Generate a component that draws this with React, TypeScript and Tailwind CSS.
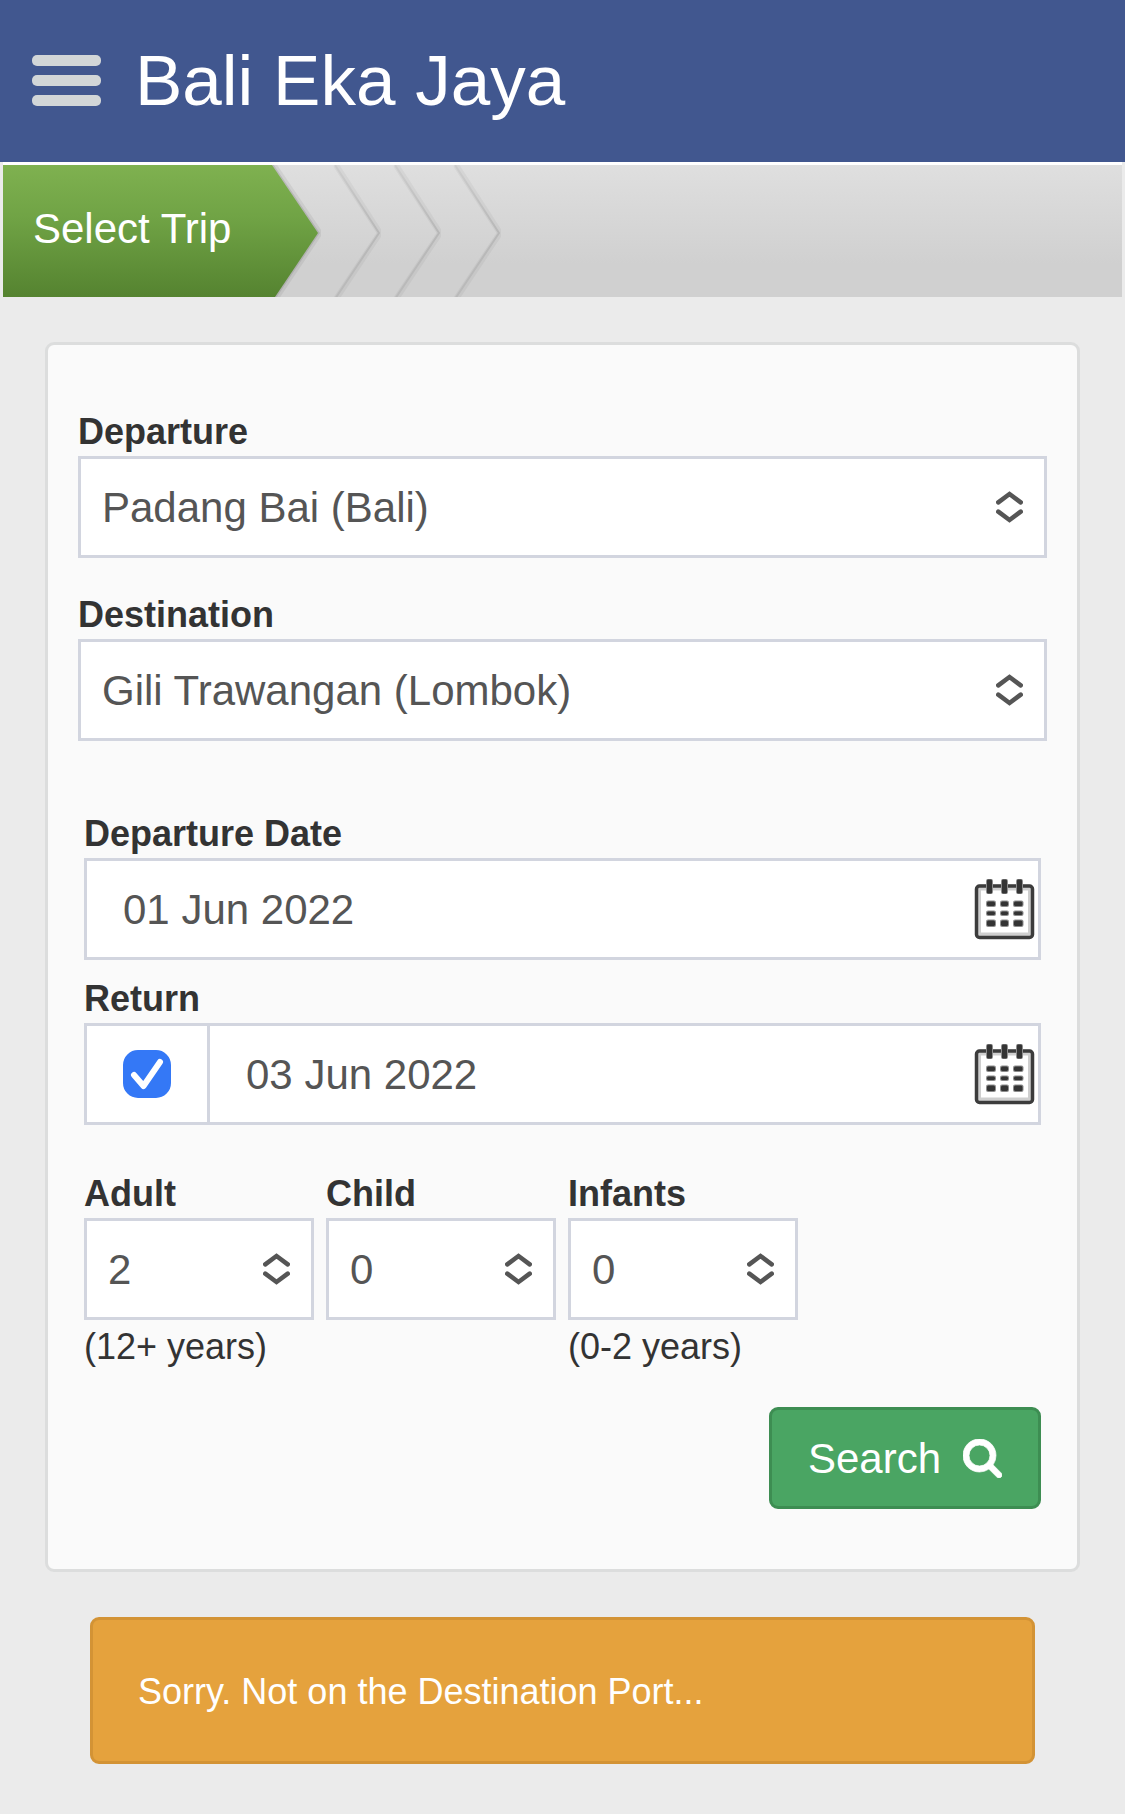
import { useState, type ReactNode } from "react";

const places = ["Padang Bai (Bali)", "Gili Trawangan (Lombok)"];
const counts = ["0", "1", "2", "3", "4", "5"];

function SortArrows() {
  return (
    <svg
      aria-hidden="true"
      viewBox="0 0 27 32"
      className="pointer-events-none absolute top-1/2 right-6 h-8 w-[27px] -translate-y-1/2"
      fill="none"
      stroke="#555555"
      strokeWidth="4.600"
      strokeLinecap="round"
    >
      <path d="M2.300 11.300 13.500 3 24.700 11.300M2.300 20.700 13.500 29 24.700 20.700" />
    </svg>
  );
}

function CalendarIcon() {
  const cols = [
    { x: 12.5, w: 9 },
    { x: 26.5, w: 8 },
    { x: 39.5, w: 9.5 },
  ];
  const rows = [
    { y: 23, h: 5.5 },
    { y: 33, h: 4.5 },
    { y: 42, h: 6.5 },
  ];
  return (
    <svg aria-hidden="true" viewBox="0 0 61 62" className="h-[62px] w-[61px]">
      <rect x="4" y="9.5" width="53" height="48" rx="2" fill="none" stroke="#cfcfcf" strokeWidth="6" />
      <rect x="2.5" y="8" width="56" height="51.5" rx="3" fill="none" stroke="#3c3c3c" strokeWidth="3.500" />
      <g fill="#8d8d8d">
        <rect x="12" y="1" width="7" height="15" rx="2" />
        <rect x="27" y="1" width="7" height="15" rx="2" />
        <rect x="42" y="1" width="7" height="15" rx="2" />
        {rows.map((r) =>
          cols.map((c) => <rect key={`${c.x}-${r.y}`} x={c.x - 0.5} y={r.y - 0.5} width={c.w + 1} height={r.h + 1} rx="2" />)
        )}
      </g>
      <g fill="#343434">
        <rect x="13" y="1.5" width="5" height="14" rx="1" />
        <rect x="28" y="1.5" width="5" height="14" rx="1" />
        <rect x="43" y="1.5" width="5" height="14" rx="1" />
        {rows.map((r) =>
          cols.map((c) => <rect key={`${c.x}-${r.y}`} x={c.x + 0.5} y={r.y + 0.5} width={c.w - 1} height={r.h - 1} rx="1.500" />)
        )}
      </g>
    </svg>
  );
}

function SelectField(props: {
  id: string;
  label: string;
  options: string[];
  initial: string;
  hint?: string;
  className?: string;
}) {
  const [value, setValue] = useState(props.initial);
  return (
    <div className={props.className}>
      <label htmlFor={props.id} className="block text-[36px] leading-[48px] font-bold text-[#333333]">
        {props.label}
      </label>
      <div className="relative">
        <select
          id={props.id}
          value={value}
          onChange={(e) => setValue(e.target.value)}
          className="block h-[102px] w-full appearance-none border-3 border-[#d2d5df] bg-white px-[21px] text-[42px] text-[#555555]"
        >
          {props.options.map((o) => (
            <option key={o}>{o}</option>
          ))}
        </select>
        <SortArrows />
      </div>
      {props.hint && <p className="text-[36px] leading-[54px] text-[#333333]">{props.hint}</p>}
    </div>
  );
}

function DateField(props: { id: string; label: string; initial: string; lead?: ReactNode; className?: string }) {
  const [value, setValue] = useState(props.initial);
  return (
    <div className={props.className}>
      <label htmlFor={props.id} className="block text-[36px] leading-[48px] font-bold text-[#333333]">
        {props.label}
      </label>
      <div className="flex h-[102px] items-stretch border-3 border-[#d2d5df] bg-white">
        {props.lead}
        <input
          id={props.id}
          type="text"
          value={value}
          onChange={(e) => setValue(e.target.value)}
          className="min-w-0 flex-1 bg-transparent px-9 text-[42px] text-[#555555] outline-none"
        />
        <button type="button" aria-label={`Choose ${props.label} date`} className="flex items-center pr-[3px]">
          <CalendarIcon />
        </button>
      </div>
    </div>
  );
}

function StepDivider({ id }: { id: string }) {
  return (
    <svg aria-hidden="true" viewBox="0 0 60 132" className="h-full w-[60px]" fill="none">
      <defs>
        <linearGradient id={id} gradientUnits="userSpaceOnUse" x1="0" y1="0" x2="0" y2="132">
          <stop offset="0" stopColor="#cdcdcd" />
          <stop offset="0.5" stopColor="#b8b8b8" />
          <stop offset="1" stopColor="#bababa" />
        </linearGradient>
      </defs>
      <path d="M15 0 59 68 15 134" stroke="#000000" strokeOpacity="0.04" strokeWidth="6" />
      <path d="M14 0 58 68 14 134" stroke={`url(#${id})`} strokeWidth="2" />
    </svg>
  );
}

export default function App() {
  const [roundTrip, setRoundTrip] = useState(true);
  return (
    <div className="min-h-screen bg-[#ebebeb] font-['Liberation_Sans',Arial,sans-serif]">
      <header className="flex h-[162px] items-center gap-[34px] bg-[#41578f] pb-[2px] pl-8">
        <button type="button" aria-label="Menu" className="flex w-[69px] flex-col gap-[9px]">
          <span className="h-[11px] rounded-[5px] bg-[#d2d6d8]" />
          <span className="h-[11px] rounded-[5px] bg-[#d2d6d8]" />
          <span className="h-[11px] rounded-[5px] bg-[#d2d6d8]" />
        </button>
        <h1 className="text-[71px] leading-none text-white">Bali Eka Jaya</h1>
      </header>

      <nav aria-label="Booking steps" className="mx-[3px] border-t-3 border-white">
        <ol className="flex h-[132px] items-stretch bg-linear-to-b from-[#dfdfdf] to-[#d0d0d0] to-75%">
          <li className="flex">
            <span className="flex items-center bg-linear-to-b from-[#7fb150] via-[#70a345] via-40% to-[#558330] pr-[39px] pb-1 pl-[30px] text-[42px] leading-none text-white">
              Select Trip
            </span>
            <svg aria-hidden="true" viewBox="0 0 51 132" className="h-full w-[51px]">
              <defs>
                <linearGradient id="step-green" x1="0" y1="0" x2="0" y2="1">
                  <stop offset="0" stopColor="#7fb150" />
                  <stop offset="0.4" stopColor="#70a345" />
                  <stop offset="1" stopColor="#558330" />
                </linearGradient>
              </defs>
              <path d="M3 0 49 68 6 132" fill="none" stroke="#000000" strokeOpacity="0.06" strokeWidth="7" />
              <path d="M2 0 48 68 5 132" fill="none" stroke="#000000" strokeOpacity="0.1" strokeWidth="3" />
              <path d="M0 0H2L48 68 5 132H0Z" fill="url(#step-green)" />
            </svg>
          </li>
          <li className="flex">
            <StepDivider id="divider-a" />
          </li>
          <li className="flex">
            <StepDivider id="divider-b" />
          </li>
          <li className="flex">
            <StepDivider id="divider-c" />
          </li>
        </ol>
      </nav>

      <main className="px-[45px] pt-[45px] pb-[50px]">
        <form
          onSubmit={(e) => e.preventDefault()}
          className="rounded-[9px] border-3 border-[#dcdddd] bg-[#fafafa] px-[30px] pt-[63px] pb-[60px]"
        >
          <SelectField id="departure" label="Departure" options={places} initial={places[0]} />
          <SelectField
            id="destination"
            label="Destination"
            options={places}
            initial={places[1]}
            className="mt-[33px]"
          />

          <div className="px-[6px] pt-[69px]">
            <DateField id="departure-date" label="Departure Date" initial="01 Jun 2022" />
            <DateField
              id="return-date"
              label="Return"
              initial="03 Jun 2022"
              className="mt-[15px]"
              lead={
                <div className="flex w-[123px] items-center justify-center border-r-3 border-[#d2d5df]">
                  <span className="relative block size-12">
                    <input
                      type="checkbox"
                      aria-label="Return trip"
                      checked={roundTrip}
                      onChange={(e) => setRoundTrip(e.target.checked)}
                      className="peer block size-12 appearance-none rounded-[15px] border-3 border-[#c4c4c4] checked:border-[#3478f6] checked:bg-[#3478f6]"
                    />
                    <svg
                      aria-hidden="true"
                      viewBox="0 0 48 48"
                      className="pointer-events-none absolute inset-0 hidden size-12 peer-checked:block"
                      fill="none"
                      stroke="#ffffff"
                      strokeWidth="6"
                      strokeLinecap="round"
                      strokeLinejoin="round"
                    >
                      <path d="M11 25 20.500 36 37 12" />
                    </svg>
                  </span>
                </div>
              }
            />

            <div className="mt-[45px] grid grid-cols-[repeat(3,230px)] gap-3">
              <SelectField id="adult" label="Adult" options={counts} initial="2" hint="(12+ years)" />
              <SelectField id="child" label="Child" options={counts} initial="0" />
              <SelectField id="infants" label="Infants" options={counts} initial="0" hint="(0-2 years)" />
            </div>

            <div className="mt-[33px] flex justify-end">
              <button
                type="submit"
                className="flex h-[102px] items-center gap-[22px] rounded-[9px] border-3 border-[#3d8d52] bg-[#4aa563] px-9 text-[42px] text-white"
              >
                Search
                <svg
                  aria-hidden="true"
                  viewBox="64 128 1664 1664"
                  className="size-[39px]"
                  fill="currentColor"
                  stroke="currentColor"
                  strokeWidth="30"
                >
                  <path d="M1216 832q0-185-131.500-316.500t-316.500-131.500-316.500 131.500-131.500 316.500 131.500 316.500 316.500 131.500 316.500-131.500 131.500-316.500zm512 832q0 52-38 90t-90 38q-54 0-90-38l-343-342q-179 124-399 124-143 0-273.500-55.500t-225-150-150-225-55.500-273.500 55.500-273.500 150-225 225-150 273.500-55.500 273.500 55.500 225 150 150 225 55.500 273.500q0 220-124 399l343 343q37 37 37 90z" />
                </svg>
              </button>
            </div>
          </div>
        </form>

        <div
          role="alert"
          className="mx-[45px] mt-[45px] rounded-[9px] border-3 border-[#d39335] bg-[#e5a23d] px-[45px] pt-[46px] pb-[44px] text-[36px] leading-[51px] text-white"
        >
          Sorry. Not on the Destination Port...
        </div>
      </main>
    </div>
  );
}
